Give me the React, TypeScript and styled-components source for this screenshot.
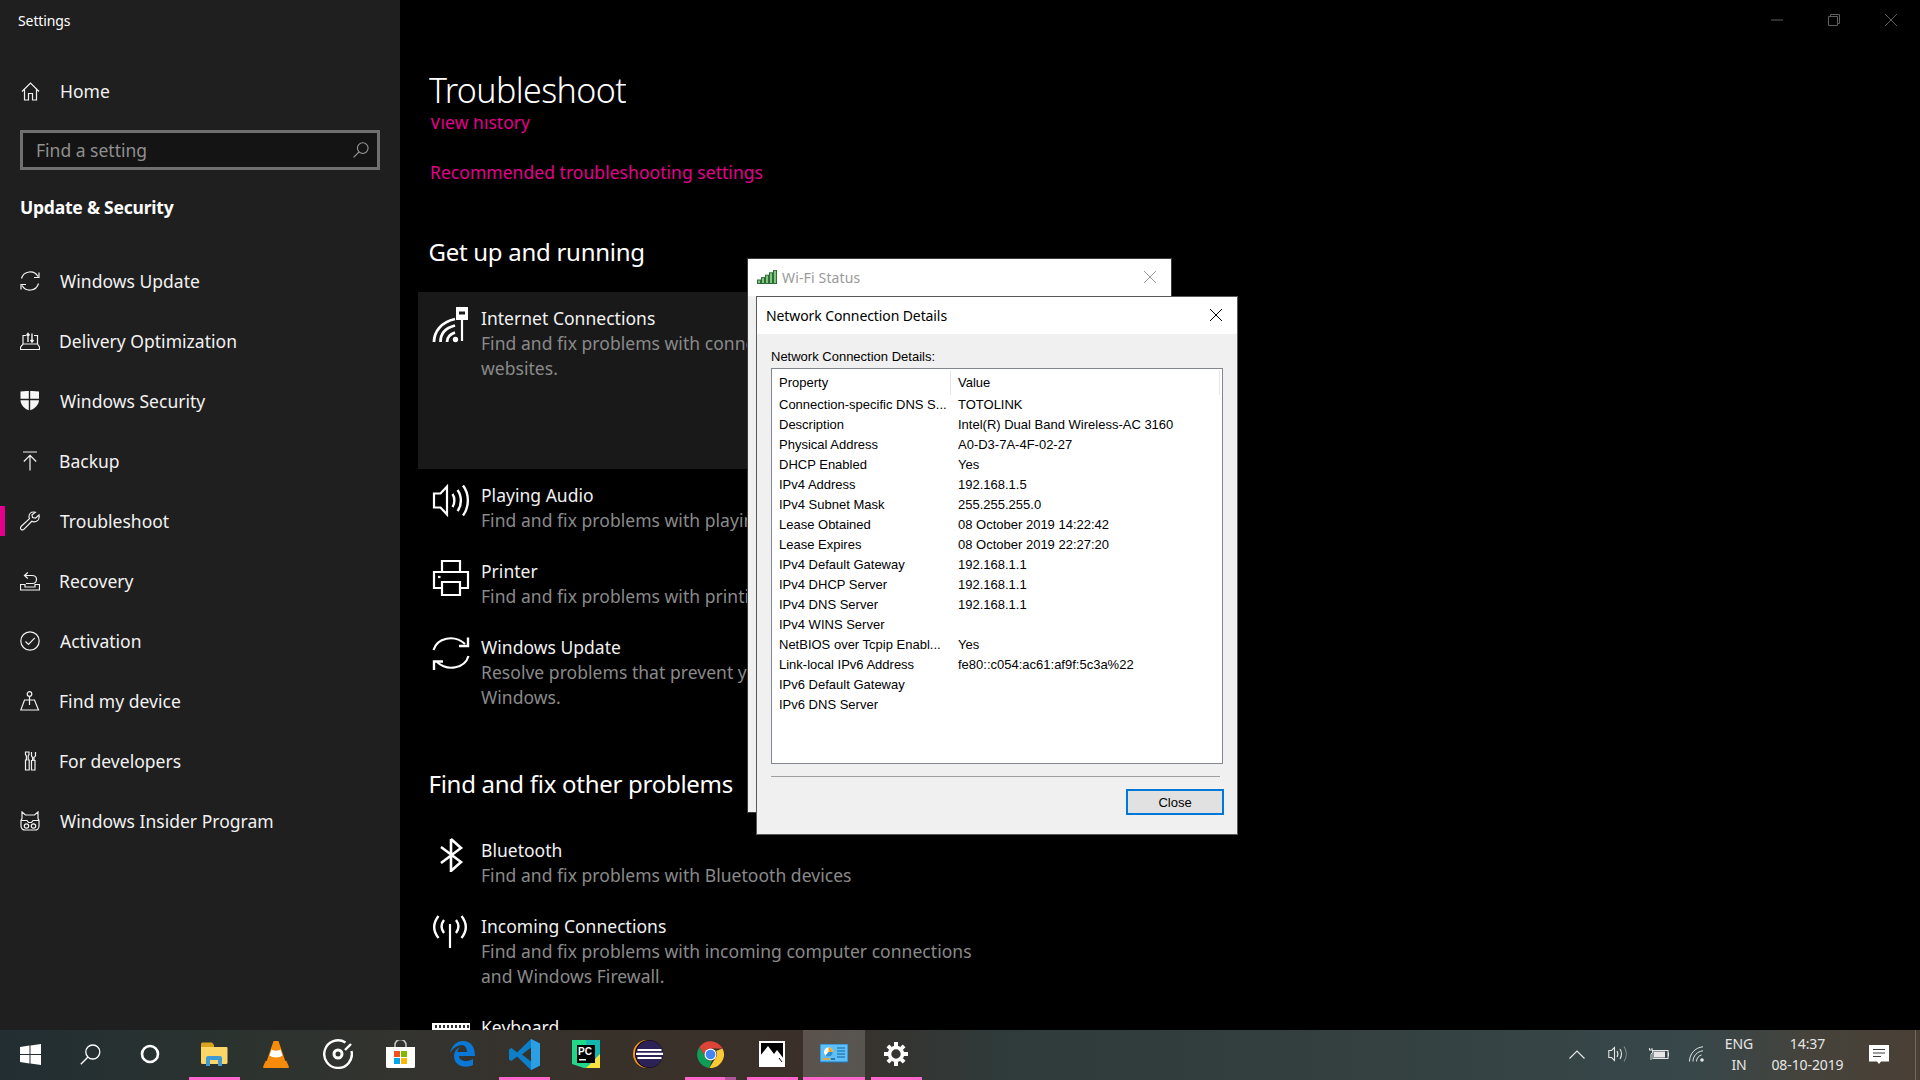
import React from 'react';
import styled, { createGlobalStyle } from 'styled-components';

const GlobalStyle = createGlobalStyle`
  html, body {
    margin: 0;
    padding: 0;
    background: #000;
    overflow: hidden;
  }
  * {
    box-sizing: border-box;
  }
`;

const UI_FONT = `"Noto Sans", "Open Sans", sans-serif`;
const DLG_FONT = `"Liberation Sans", Arial, sans-serif`;
const ACCENT = '#e3008c';

const Desktop = styled.div`
  position: relative;
  width: 1920px;
  height: 1080px;
  display: flex;
  flex-direction: column;
  overflow: hidden;
  font-family: ${UI_FONT};
  color: #fff;
`;

const SettingsWindow = styled.div`
  display: flex;
  height: 1030px;
  background: #000;
`;

const Sidebar = styled.aside`
  width: 400px;
  flex: none;
  background: #1f1f1f;
`;

const AppTitle = styled.div`
  height: 40px;
  padding-left: 18px;
  line-height: 41px;
  font-size: 14px;
  letter-spacing: -0.1px;
`;

const NavRow = styled.div<{ $active?: boolean; $tight?: boolean }>`
  position: relative;
  display: flex;
  align-items: center;
  height: 60px;
  padding-left: 20px;
  gap: ${({ $tight }) => ($tight ? 19 : 20)}px;
  font-size: 17.5px;
  letter-spacing: 0.02px;
  color: #f2f2f2;

  ${({ $active }) =>
    $active &&
    `
    &::before {
      content: '';
      position: absolute;
      left: 0;
      top: 15px;
      width: 5px;
      height: 30px;
      background: ${ACCENT};
    }
  `}
`;

const HomeRow = styled(NavRow)`
  margin-top: 21px;
`;

const SearchBox = styled.div`
  display: flex;
  align-items: center;
  justify-content: space-between;
  width: 360px;
  height: 40px;
  margin: 9px 0 0 20px;
  padding: 0 8px 0 13px;
  border: 3px solid #6f6f6f;
  background: #141414;
  color: #8f8f8f;
  font-size: 17.5px;
`;

const SectionTitle = styled.div`
  height: 30px;
  margin: 22px 0 29px 20px;
  line-height: 30px;
  font-size: 17.5px;
  font-weight: 700;
  letter-spacing: -0.22px;
`;

const Main = styled.main`
  flex: 1;
  display: flex;
  flex-direction: column;
  min-width: 0;
`;

const MainHeader = styled.header`
  display: flex;
  justify-content: space-between;
  height: 118px;
  flex: none;
  padding-left: 29px;
  padding-right: 1px;
`;

const PageTitle = styled.h1`
  margin: 0;
  padding-top: 65px;
  font-size: 34px;
  line-height: 50px;
  height: 118px;
  font-weight: 300;
  letter-spacing: -0.6px;
  overflow: hidden;
  color: #fff;
`;

const WindowControls = styled.div`
  display: flex;
  height: 40px;
`;

const WindowButton = styled.div`
  width: 57px;
  display: flex;
  align-items: center;
  justify-content: center;
`;

const Scroller = styled.div`
  flex: 1;
  overflow: hidden;
  padding-left: 30px;
`;

const ScrollContent = styled.div`
  margin-top: -8px;
  width: 700px;
`;

const PageLink = styled.div<{ $gap?: number }>`
  margin-top: ${({ $gap }) => $gap ?? 0}px;
  height: 25px;
  line-height: 25px;
  font-size: 17.5px;
  letter-spacing: 0.04px;
  color: ${ACCENT};
`;

const GroupHeading = styled.h2<{ $top: number }>`
  margin: ${({ $top }) => $top}px 0 0 -1.5px;
  height: 34px;
  line-height: 34px;
  font-size: 24px;
  font-weight: 400;
  letter-spacing: -0.28px;
  color: #fff;
`;

const TroubleRow = styled.div<{ $selected?: boolean; $top?: number }>`
  display: flex;
  gap: 11px;
  margin: ${({ $top }) => $top ?? 0}px 0 0 -12px;
  padding: 14px 0 12px 14px;
  width: 620px;
  background: ${({ $selected }) => ($selected ? '#191919' : 'transparent')};
  min-height: ${({ $selected }) => ($selected ? '177px' : '0')};
`;

const TroubleIcon = styled.div`
  width: 38px;
  flex: none;
  display: flex;
  justify-content: center;
  align-items: flex-start;
`;

const TroubleText = styled.div`
  width: 510px;
`;

const TroubleName = styled.div`
  line-height: 25px;
  font-size: 17.5px;
  letter-spacing: 0.02px;
  color: #f2f2f2;
`;

const TroubleDesc = styled.div`
  line-height: 25px;
  font-size: 17.5px;
  letter-spacing: 0.04px;
  color: #8a8a8a;
`;

/* dialogs */
const WifiStatusWindow = styled.div`
  position: absolute;
  left: 747px;
  top: 258px;
  width: 425px;
  height: 555px;
  background: #f0f0f0;
  border: 1px solid #3a3a3a;
`;

const WifiTitleBar = styled.div`
  display: flex;
  align-items: center;
  height: 37px;
  padding: 0 15px 1px 9px;
  gap: 5px;
  background: #fff;
  font-family: ${UI_FONT};
  font-size: 14px;
  letter-spacing: 0.15px;
  color: #9a9a9a;
`;

const DialogClose = styled.div`
  margin-left: auto;
  display: flex;
`;

const DetailsDialog = styled.div`
  position: absolute;
  left: 756px;
  top: 296px;
  width: 482px;
  height: 539px;
  display: flex;
  flex-direction: column;
  background: #f0f0f0;
  border: 1px solid #5a5a5a;
  font-family: ${DLG_FONT};
  font-size: 13px;
  color: #000;
`;

const DetailsTitleBar = styled.div`
  display: flex;
  align-items: center;
  flex: none;
  height: 37px;
  padding: 0 15px 1px 9px;
  background: #fff;
  font-family: ${UI_FONT};
  font-size: 14px;
  letter-spacing: -0.1px;
  color: #000;
`;

const DetailsBody = styled.div`
  flex: 1;
  padding: 15px 13px 0 14px;
`;

const DetailsLabel = styled.div`
  height: 16px;
  margin-bottom: 3px;
  line-height: 16px;
  font-size: 13px;
`;

const ListBox = styled.div`
  width: 452px;
  height: 396px;
  background: #fff;
  border: 1px solid #828790;
`;

const ListHeader = styled.div`
  display: grid;
  grid-template-columns: 179px 1fr;
  height: 24px;
  margin-top: 2px;
  margin-right: 2px;
  line-height: 24px;
  border-right: 1px solid #e5e5e5;
`;

const ListHeaderCell = styled.div<{ $first?: boolean }>`
  padding-left: 7px;
  border-right: ${({ $first }) => ($first ? '1px solid #e5e5e5' : 'none')};
`;

const ListRow = styled.div`
  display: grid;
  grid-template-columns: 179px 1fr;
  height: 20px;
  line-height: 20px;
`;

const ListCell = styled.div`
  padding-left: 7px;
  white-space: nowrap;
  overflow: hidden;
`;

const Divider = styled.div`
  width: 449px;
  margin-top: 12px;
  border-top: 1px solid #a0a0a0;
`;

const DialogFooter = styled.div`
  display: flex;
  justify-content: flex-end;
  width: 453px;
  margin-top: 12px;
`;

const CloseButton = styled.button`
  width: 98px;
  height: 26px;
  padding: 0;
  background: #e1e1e1;
  border: 2px solid #0078d7;
  font-family: ${DLG_FONT};
  font-size: 13px;
  color: #000;
`;

/* taskbar */
const Taskbar = styled.footer`
  display: flex;
  align-items: stretch;
  height: 50px;
  flex: none;
  background: linear-gradient(
    90deg,
    #222e33 0%,
    #2b332f 12%,
    #33332f 21%,
    #38312a 32%,
    #3a3029 42%,
    #2f3a3a 52%,
    #34403f 70%,
    #37474a 88%,
    #45433c 94%,
    #4a3f35 100%
  );
`;

const SystemButtons = styled.div`
  display: flex;
  margin-right: 3px;
`;

const SystemButton = styled.div`
  width: 60px;
  display: flex;
  align-items: center;
  justify-content: center;
  padding-bottom: 2px;
`;

const AppButton = styled.div<{ $running?: boolean; $active?: boolean; $stacked?: boolean }>`
  position: relative;
  width: 62px;
  display: flex;
  align-items: center;
  justify-content: center;
  padding-bottom: 2px;
  background: ${({ $active }) => ($active ? 'rgba(255,255,255,0.17)' : 'transparent')};

  ${({ $running, $active, $stacked }) =>
    $running &&
    `
    &::after {
      content: '';
      position: absolute;
      bottom: 0;
      left: ${$active ? 0 : 5.5}px;
      right: ${$active ? 0 : 5.5}px;
      height: 3px;
      background: ${$stacked ? 'linear-gradient(90deg, #ff66cc 78%, #b0559a 78%)' : '#ff66cc'};
    }
  `}
`;

const Tray = styled.div`
  margin-left: auto;
  display: flex;
  color: #e6e6e6;
  font-size: 14px;
`;

const TrayItem = styled.div<{ $w: number }>`
  width: ${({ $w }) => $w}px;
  display: flex;
  flex-direction: column;
  align-items: center;
  justify-content: center;
  padding-bottom: 2px;
  line-height: 21px;
  letter-spacing: -0.1px;
`;

const ShowDesktop = styled.div`
  width: 14px;
  padding-left: 9px;
  &::before {
    content: '';
    display: block;
    width: 1px;
    height: 100%;
    background: #6d6a66;
  }
`;

/* sidebar icons, 20x20 */
const Nav = ({ children }: { children: React.ReactNode }) => (
  <svg width="20" height="20" viewBox="0 0 20 20" fill="none" stroke="#f2f2f2" strokeWidth="1.2">
    {children}
  </svg>
);

const navIcons: Record<string, React.ReactNode> = {
  home: (
    <Nav>
      <path d="M2 10.5 10.5 2 19 10.5M4.5 8.5V19H8.5V12.5H12.5V19H16.5V8.5" />
    </Nav>
  ),
  update: (
    <Nav>
      <path d="M1.500 7.500A9 9 0 0 1 18 5.500M18.500 12.500A9 9 0 0 1 2 14.500" />
      <path d="M19 1.500V6.500H14M1 18.500V13.500H6" />
    </Nav>
  ),
  delivery: (
    <Nav>
      <path d="M3 13V4.500H6M14 4.500H17.500V13M.5 18.500H19.500V16L17.500 13H3L.5 16Z" />
      <path d="M8 11V3M6.500 4.500 8 2.500 9.500 4.500M12 2.500V11M10.500 9 12 11 13.500 9" strokeWidth="1.4" />
    </Nav>
  ),
  shield: (
    <svg width="20" height="20" viewBox="0 0 20 20">
      <path d="M.5.500C4 .500 7 0 9.500-.5 12 0 15 .500 19 .500V9C19 14 14.500 18 9.500 19.500 4.500 18 .5 14 .5 9Z" fill="#f7f7f7" />
      <path d="M9.500-1V20M0 8.500H20" stroke="#1f1f1f" strokeWidth="1.4" />
    </svg>
  ),
  backup: (
    <Nav>
      <path d="M3 1H17M10 19.500V4.500M3.800 10.500 10 4.300 16.200 10.500" />
    </Nav>
  ),
  wrench: (
    <Nav>
      <path d="M13.500 1C10.800 1 9 3 9 5.500 9 6.300 9.200 7 9.500 7.700L1.300 15.300C.3 16.300.3 17.500 1 18.300 1.800 19.200 3.200 19.200 4.100 18.200L11.800 10.300C12.500 10.600 13.300 10.800 14 10.800 17 10.800 19.200 8.500 19.200 5.500 19.200 5 19.100 4.500 19 4L15.500 7.200 12.500 6.500 12 3.800 15.400 1.300C14.800 1.100 14.200 1 13.500 1Z" />
    </Nav>
  ),
  recovery: (
    <Nav>
      <path d="M.5 19H19.500V13.500H15V16H5V13.500H.5Z" />
      <path d="M4.500 4.500H12C15 4.500 16.500 6.500 16.500 8.500 16.500 10.500 15 12.500 12.500 12.500H6M7.800 1.500 4.500 4.500 7.800 7.500" />
    </Nav>
  ),
  activation: (
    <Nav>
      <circle cx="10" cy="10" r="9.200" />
      <path d="M5.500 10.500 8.500 13.500 14.800 6.800" />
    </Nav>
  ),
  device: (
    <Nav>
      <circle cx="9.500" cy="3" r="2.300" />
      <path d="M9.500 5.500V14M4.500 9H14.500L18.500 19H.8Z" />
    </Nav>
  ),
  developer: (
    <Nav>
      <path d="M5.500 1H9V3.500L8.200 5V9H9.200V19H5.500V9H6.400V5L5.500 3.500Z" />
      <path d="M11.500 1V4.500C11.500 5.500 12 6 12.600 6.300V9.500H11.500V19H15V9.500H14V6.300C14.600 6 15.500 5.500 15.500 4.500V1" />
    </Nav>
  ),
  insider: (
    <Nav>
      <path d="M2 1 5.500 4H14.500L18 1V7.500L19 9.500V15C19 17.500 17 19 15 19H5C3 19 1 17.500 1 15V9.500L2 7.500Z" />
      <path d="M1 9.500H7L8.500 11.500H11.500L13 9.500H19" />
      <circle cx="6.500" cy="15" r="2.200" />
      <circle cx="13.500" cy="15" r="2.200" />
    </Nav>
  ),
};

const navItems: { icon: string; label: string; tight?: boolean }[] = [
  { icon: 'update', label: 'Windows Update' },
  { icon: 'delivery', label: 'Delivery Optimization', tight: true },
  { icon: 'shield', label: 'Windows Security' },
  { icon: 'backup', label: 'Backup', tight: true },
  { icon: 'wrench', label: 'Troubleshoot' },
  { icon: 'recovery', label: 'Recovery', tight: true },
  { icon: 'activation', label: 'Activation' },
  { icon: 'device', label: 'Find my device', tight: true },
  { icon: 'developer', label: 'For developers', tight: true },
  { icon: 'insider', label: 'Windows Insider Program' },
];

/* troubleshooter icons, 38px wide */
const Big = ({ children, w = 38, h = 38 }: { children: React.ReactNode; w?: number; h?: number }) => (
  <svg width={w} height={h} viewBox={`0 0 ${w} ${h}`} fill="none" stroke="#fff" strokeWidth="2.2">
    {children}
  </svg>
);

const InternetIcon = () => (
  <Big>
    <path d="M2 36C2 26 9 16 23 13M8.500 36C8.500 28 13 22 23 19.500M15 36C15 32 17 28.500 23 26.500" strokeWidth="2.800" />
    <circle cx="23.500" cy="33.500" r="2.700" fill="#fff" stroke="none" />
    <path d="M30 14V35" />
    <rect x="24" y="1" width="12" height="13" fill="#fff" stroke="none" />
    <rect x="27" y="5.500" width="6" height="3" fill="#191919" stroke="none" />
  </Big>
);

const AudioIcon = () => (
  <Big h={34}>
    <path d="M2 10.500H8.500L15 3.500V31.500L8.500 24.500H2Z" />
    <path d="M20.500 11C23 14.500 23 20.500 20.500 24M25.500 7C30 13 30 22 25.500 28M31 2.500C37.500 11 37.500 24 31 32.500" strokeWidth="2.400" />
  </Big>
);

const PrinterIcon = () => (
  <Big>
    <path d="M10 13V2H28V13" />
    <path d="M10 29H2V13H36V29H28" />
    <path d="M10 23H28V36H10Z" />
    <path d="M6 18H8.500" />
  </Big>
);

const SyncIcon = () => (
  <Big>
    <path d="M1.500 15C5 3 22 -1 33 9M36.500 21C33 33 16 37 5 27" />
    <path d="M36 2.500V11H27M2 35V26.500H11" strokeWidth="2.400" />
  </Big>
);

const BluetoothIcon = () => (
  <Big h={34}>
    <path d="M19 1V33L29 24 9 9M19 1 29 10 9 25" strokeWidth="2.600" />
  </Big>
);

const AntennaIcon = () => (
  <Big h={34}>
    <path d="M18 10V34" strokeWidth="2.200" />
    <path d="M12 6C9 10 9 15 12 19M24 6C27 10 27 15 24 19M6.500 2C1 9 1 17 6.500 24M29.500 2C35 9 35 17 29.500 24" strokeWidth="2.400" />
  </Big>
);

const KeyboardIcon = () => (
  <Big h={30}>
    <rect x="0" y="8" width="38" height="22" fill="#fff" stroke="none" />
    <path d="M4 10V13M8 10V13M12 10V13M16 10V13M20 10V13M24 10V13M28 10V13M32 10V13M36 10V13" stroke="#000" strokeWidth="1.600" />
  </Big>
);

/* taskbar icons */
const WindowsIcon = () => (
  <svg width="21" height="21" viewBox="0 0 21 21" fill="#fff">
    <path d="M0 3 9.500 1.600V10H0ZM10.500 1.400 21 0V10H10.500ZM0 11H9.500V19.400L0 18ZM10.500 11H21V21L10.500 19.600Z" />
  </svg>
);

const SearchIcon = ({ size = 21, color = '#fff', w = 1.300 }: { size?: number; color?: string; w?: number }) => (
  <svg width={size} height={size} viewBox="0 0 21 21" fill="none" stroke={color} strokeWidth={w}>
    <circle cx="12.800" cy="8" r="7" />
    <path d="M8 13 .8 20.300" />
  </svg>
);

const CortanaIcon = () => (
  <svg width="20" height="20" viewBox="0 0 20 20" fill="none" stroke="#fff" strokeWidth="2.600">
    <circle cx="10" cy="10" r="8" />
  </svg>
);

const ExplorerIcon = () => (
  <svg width="28" height="24" viewBox="0 0 28 24">
    <path d="M1 2A1.500 1.500 0 0 1 2.500 .5H12L14 3V6H1Z" fill="#d9a21f" />
    <path d="M1 5H26.500A1 1 0 0 1 27.500 6V20.500A1.500 1.500 0 0 1 26 22H2.500A1.500 1.500 0 0 1 1 20.500Z" fill="#fcd768" />
    <path d="M6 24V16A2 2 0 0 1 8 14H20A2 2 0 0 1 22 16V24H18V18H10V24Z" fill="#3f9ad6" />
  </svg>
);

const VlcIcon = () => (
  <svg width="26" height="27" viewBox="0 0 26 27">
    <path d="M10.500 0H15.500L23 22H3Z" fill="#f58a0b" />
    <path d="M8.500 8.500C10 10 16 10 17.500 8.500L19.500 14.500C17 17 9 17 6.500 14.500Z" fill="#fff" />
    <path d="M2.500 20H23.500L26 26A1 1 0 0 1 25 27H1A1 1 0 0 1 0 26Z" fill="#f58a0b" />
  </svg>
);

const GrooveIcon = () => (
  <svg width="30" height="30" viewBox="0 0 30 30" fill="none" stroke="#fff">
    <path d="M22.500 3.500A13.800 13.800 0 1 0 28.500 12" strokeWidth="2.400" />
    <path d="M28 5 22 11" strokeWidth="2.400" />
    <circle cx="15" cy="15" r="4" strokeWidth="3" />
  </svg>
);

const StoreIcon = () => (
  <svg width="29" height="28" viewBox="0 0 29 28">
    <path d="M9 9V5A5.500 5.500 0 0 1 20 5V9" fill="none" stroke="#c9c9c9" strokeWidth="1.500" />
    <path d="M0 7H29V26.500A1.500 1.500 0 0 1 27.500 28H1.500A1.500 1.500 0 0 1 0 26.500Z" fill="#fff" />
    <rect x="8" y="11" width="6" height="6" fill="#f25022" />
    <rect x="15" y="11" width="6" height="6" fill="#7fba00" />
    <rect x="8" y="18" width="6" height="6" fill="#00a4ef" />
    <rect x="15" y="18" width="6" height="6" fill="#ffb900" />
  </svg>
);

const EdgeIcon = () => (
  <svg width="25" height="26" viewBox="0 0 25 26">
    <path
      d="M0 12C2 4 7 0 13 0 20 0 25 5 25 15H9C9.500 20 16 22 23 18V24C15 28 4 25 4 15 4 11 6 8 10 6 8 8 7.500 9.500 7.500 11H17C17 7 15 4 12 4 7.500 4 3 7 0 12Z"
      fill="#0a78d7"
    />
  </svg>
);

const VsCodeIcon = () => (
  <svg width="31" height="31" viewBox="0 0 31 31">
    <path d="M22 0 31 4.500V26.500L22 31 8 17.500 2.500 22 0 20.500V10.500L2.500 9 8 13.500Z M22 8.500 13 15.500 22 22.500Z" fill="#0d7fc9" fillRule="evenodd" />
    <path d="M22 0 31 4.500V26.500L22 31Z" fill="#2a9fe4" />
  </svg>
);

const PyCharmIcon = () => (
  <svg width="28" height="28" viewBox="0 0 28 28">
    <path d="M0 0H28L24 14 28 28H12L0 24Z" fill="#21d789" />
    <path d="M14 0H28V28H16Z" fill="#12b8b0" />
    <path d="M28 14V28H14Z" fill="#f5e33b" />
    <rect x="5" y="5" width="18" height="18" fill="#000" />
    <text x="6" y="14.500" fill="#fff" fontFamily="Liberation Sans" fontSize="10" fontWeight="700">PC</text>
    <rect x="7" y="19" width="7" height="1.500" fill="#fff" />
  </svg>
);

const EclipseIcon = () => (
  <svg width="30" height="28" viewBox="0 0 30 28">
    <circle cx="14" cy="14" r="14" fill="#f7941e" />
    <circle cx="16" cy="14" r="14" fill="#000" />
    <circle cx="16.500" cy="14" r="13.500" fill="#2c2255" />
    <path d="M4.500 9H28.500V11H4.500ZM3 12.800H30V15H3ZM4.500 17H28.500V19H4.500Z" fill="#fff" />
  </svg>
);

const ChromeIcon = () => (
  <svg width="27" height="27" viewBox="0 0 27 27">
    <path d="M2.400 6A13.500 13.500 0 0 1 25.500 7.500H13.500A6 6 0 0 0 7.700 15Z" fill="#db4437" />
    <path d="M25.500 7.500A13.500 13.500 0 0 1 12.300 27L18.500 17A6 6 0 0 0 19 10Z" fill="#fcc934" />
    <path d="M12.300 27A13.500 13.500 0 0 1 2.400 6L8.500 16.500A6 6 0 0 0 15 19.500Z" fill="#0f9d58" />
    <circle cx="13.500" cy="13.500" r="6" fill="#fff" />
    <circle cx="13.500" cy="13.500" r="4.800" fill="#4285f4" />
  </svg>
);

const PhotosIcon = () => (
  <svg width="26" height="26" viewBox="0 0 26 26">
    <rect x="1" y="1" width="24" height="24" fill="#000" stroke="#fff" strokeWidth="2" />
    <path d="M1 25V15L9 5 15 13 18 9 25 18V25Z" fill="#fff" />
    <path d="M20 17 23 21" stroke="#000" strokeWidth="1" />
  </svg>
);

const ControlPanelIcon = () => (
  <svg width="28" height="20" viewBox="0 0 28 20">
    <rect x="0" y="0" width="28" height="18" fill="#5fc0f5" stroke="#1b79c8" strokeWidth="1" />
    <circle cx="8.500" cy="8" r="4.500" fill="#fff" />
    <path d="M8.500 8V3.500A4.500 4.500 0 0 1 13 8Z" fill="#f6a623" />
    <path d="M8.500 8H13A4.500 4.500 0 0 1 5.500 11.500Z" fill="#2d8fd6" />
    <path d="M17 4H25M17 7H25M17 10H25M17 13H25" stroke="#17609f" strokeWidth="1.200" />
    <path d="M3 15H10" stroke="#f6a623" strokeWidth="1.500" />
    <path d="M11 15H15" stroke="#17609f" strokeWidth="1.500" />
  </svg>
);

const GearIcon = () => (
  <svg width="24" height="24" viewBox="0 0 24 24">
    <circle cx="12" cy="12" r="6.500" fill="none" stroke="#fff" strokeWidth="3.600" />
    <path
      d="M10 0H14V4H10ZM10 20H14V24H10ZM0 10H4V14H0ZM20 10H24V14H20ZM2.500 5.300 5.300 2.500 8 5.300 5.300 8ZM16 18.700 18.700 16 21.500 18.700 18.700 21.500ZM2.500 18.700 5.300 16 8 18.700 5.300 21.500ZM16 5.300 18.700 2.500 21.500 5.300 18.700 8Z"
      fill="#fff"
    />
  </svg>
);

const ChevronIcon = () => (
  <svg width="16" height="9" viewBox="0 0 16 9" fill="none" stroke="#e6e6e6" strokeWidth="1.200">
    <path d="M.5 8.500 8 1 15.500 8.500" />
  </svg>
);

const SpeakerIcon = () => (
  <svg width="20" height="16" viewBox="0 0 20 16" fill="none" stroke="#e6e6e6" strokeWidth="1.100">
    <path d="M.8 4.500H3.500L6.500 1.500V14.500L3.500 11.500H.8Z" />
    <path d="M9 5C10.200 7 10.200 9 9 11M12 3C13.800 6 13.800 10 12 13" />
    <path d="M16 .5C19 5 19 11 16 15.500" stroke="#8a8a8a" />
  </svg>
);

const BatteryIcon = () => (
  <svg width="20" height="12" viewBox="0 0 20 12">
    <path d="M.5 0V2M3 0V2M0 2H3.500V4.500L2 6V12" fill="none" stroke="#e6e6e6" strokeWidth="1" />
    <rect x="4" y="2.500" width="15" height="8" fill="none" stroke="#e6e6e6" />
    <rect x="5" y="3.500" width="11" height="6" fill="#e6e6e6" />
    <rect x="19" y="4.500" width="1" height="4" fill="#e6e6e6" />
  </svg>
);

const TrayWifiIcon = () => (
  <svg width="16" height="16" viewBox="0 0 16 16" fill="none" stroke="#e6e6e6" strokeWidth="1">
    <path d="M.5 15.500C.5 8 6 1.500 14 .8M4 15.500C4 10 8 5.500 14 4.800" />
    <path d="M7.500 15.500C7.500 12 10 9.500 12.500 9" stroke="#e6e6e6" />
    <circle cx="13" cy="14" r="1.800" fill="#e6e6e6" stroke="none" />
  </svg>
);

const NotificationIcon = () => (
  <svg width="20" height="19" viewBox="0 0 20 19">
    <path d="M0 0H20V16.500H12L10 19 8 16.500H0Z" fill="#fff" />
    <path d="M4 4.500H16M4 8H16M4 11.500H12" stroke="#3c3c3c" strokeWidth="1" />
  </svg>
);

const CrossIcon = ({ size, color, w = 1 }: { size: number; color: string; w?: number }) => (
  <svg width={size} height={size} viewBox={`0 0 ${size} ${size}`} stroke={color} strokeWidth={w}>
    <path d={`M0 0 ${size} ${size}M${size} 0 0 ${size}`} />
  </svg>
);

const SignalIcon = () => (
  <svg width="20" height="14" viewBox="0 0 20 14">
    {[0, 1, 2, 3, 4].map((i) => (
      <rect
        key={i}
        x={i * 4 + 0.5}
        y={10 - i * 2.4}
        width="3"
        height={3.5 + i * 2.4}
        fill="#7fc77f"
        stroke="#2f6a3a"
        strokeWidth="1"
      />
    ))}
  </svg>
);

const networkRows: [string, string][] = [
  ['Connection-specific DNS S...', 'TOTOLINK'],
  ['Description', 'Intel(R) Dual Band Wireless-AC 3160'],
  ['Physical Address', 'A0-D3-7A-4F-02-27'],
  ['DHCP Enabled', 'Yes'],
  ['IPv4 Address', '192.168.1.5'],
  ['IPv4 Subnet Mask', '255.255.255.0'],
  ['Lease Obtained', '08 October 2019 14:22:42'],
  ['Lease Expires', '08 October 2019 22:27:20'],
  ['IPv4 Default Gateway', '192.168.1.1'],
  ['IPv4 DHCP Server', '192.168.1.1'],
  ['IPv4 DNS Server', '192.168.1.1'],
  ['IPv4 WINS Server', ''],
  ['NetBIOS over Tcpip Enabl...', 'Yes'],
  ['Link-local IPv6 Address', 'fe80::c054:ac61:af9f:5c3a%22'],
  ['IPv6 Default Gateway', ''],
  ['IPv6 DNS Server', ''],
];

const apps: { icon: React.ReactNode; running?: boolean; active?: boolean; stacked?: boolean }[] = [
  { icon: <ExplorerIcon />, running: true },
  { icon: <VlcIcon /> },
  { icon: <GrooveIcon /> },
  { icon: <StoreIcon /> },
  { icon: <EdgeIcon /> },
  { icon: <VsCodeIcon />, running: true },
  { icon: <PyCharmIcon /> },
  { icon: <EclipseIcon /> },
  { icon: <ChromeIcon />, running: true, stacked: true },
  { icon: <PhotosIcon />, running: true },
  { icon: <ControlPanelIcon />, running: true, active: true },
  { icon: <GearIcon />, running: true },
];

const App: React.FC = () => (
  <Desktop>
    <GlobalStyle />
    <SettingsWindow>
      <Sidebar>
        <AppTitle>Settings</AppTitle>
        <HomeRow>
          {navIcons.home}
          Home
        </HomeRow>
        <SearchBox>
          Find a setting
          <SearchIcon size={16} color="#9a9a9a" w={1.400} />
        </SearchBox>
        <SectionTitle>Update &amp; Security</SectionTitle>
        {navItems.map(({ icon, label, tight }) => (
          <NavRow key={label} $tight={tight} $active={label === 'Troubleshoot'}>
            {navIcons[icon]}
            {label}
          </NavRow>
        ))}
      </Sidebar>
      <Main>
        <MainHeader>
          <PageTitle>Troubleshoot</PageTitle>
          <WindowControls>
            <WindowButton>
              <svg width="12" height="2" viewBox="0 0 12 2"><path d="M0 1H12" stroke="#5f5f5f" /></svg>
            </WindowButton>
            <WindowButton>
              <svg width="12" height="12" viewBox="0 0 12 12" fill="none" stroke="#5f5f5f">
                <path d="M.5 2.500H9.500V11.500H.5ZM2.500 2.500V.5H11.500V9.500H9.500" />
              </svg>
            </WindowButton>
            <WindowButton>
              <CrossIcon size={12} color="#5f5f5f" />
            </WindowButton>
          </WindowControls>
        </MainHeader>
        <Scroller>
          <ScrollContent>
            <PageLink>View history</PageLink>
            <PageLink $gap={25}>Recommended troubleshooting settings</PageLink>
            <GroupHeading $top={50}>Get up and running</GroupHeading>
            <TroubleRow $selected $top={23}>
              <TroubleIcon><InternetIcon /></TroubleIcon>
              <TroubleText>
                <TroubleName>Internet Connections</TroubleName>
                <TroubleDesc>Find and fix problems with connecting to the Internet or to websites.</TroubleDesc>
              </TroubleText>
            </TroubleRow>
            <TroubleRow>
              <TroubleIcon><AudioIcon /></TroubleIcon>
              <TroubleText>
                <TroubleName>Playing Audio</TroubleName>
                <TroubleDesc>Find and fix problems with playing sound</TroubleDesc>
              </TroubleText>
            </TroubleRow>
            <TroubleRow>
              <TroubleIcon><PrinterIcon /></TroubleIcon>
              <TroubleText>
                <TroubleName>Printer</TroubleName>
                <TroubleDesc>Find and fix problems with printing</TroubleDesc>
              </TroubleText>
            </TroubleRow>
            <TroubleRow>
              <TroubleIcon><SyncIcon /></TroubleIcon>
              <TroubleText>
                <TroubleName>Windows Update</TroubleName>
                <TroubleDesc>Resolve problems that prevent you from updating<br />Windows.</TroubleDesc>
              </TroubleText>
            </TroubleRow>
            <GroupHeading $top={45}>Find and fix other problems</GroupHeading>
            <TroubleRow $top={23}>
              <TroubleIcon><BluetoothIcon /></TroubleIcon>
              <TroubleText>
                <TroubleName>Bluetooth</TroubleName>
                <TroubleDesc>Find and fix problems with Bluetooth devices</TroubleDesc>
              </TroubleText>
            </TroubleRow>
            <TroubleRow>
              <TroubleIcon><AntennaIcon /></TroubleIcon>
              <TroubleText>
                <TroubleName>Incoming Connections</TroubleName>
                <TroubleDesc>Find and fix problems with incoming computer connections and Windows Firewall.</TroubleDesc>
              </TroubleText>
            </TroubleRow>
            <TroubleRow>
              <TroubleIcon><KeyboardIcon /></TroubleIcon>
              <TroubleText>
                <TroubleName>Keyboard</TroubleName>
              </TroubleText>
            </TroubleRow>
          </ScrollContent>
        </Scroller>
      </Main>
    </SettingsWindow>

    <WifiStatusWindow>
      <WifiTitleBar>
        <SignalIcon />
        Wi-Fi Status
        <DialogClose><CrossIcon size={12} color="#9a9a9a" /></DialogClose>
      </WifiTitleBar>
    </WifiStatusWindow>

    <DetailsDialog>
      <DetailsTitleBar>
        Network Connection Details
        <DialogClose><CrossIcon size={12} color="#000" /></DialogClose>
      </DetailsTitleBar>
      <DetailsBody>
        <DetailsLabel>Network Connection Details:</DetailsLabel>
        <ListBox>
          <ListHeader>
            <ListHeaderCell $first>Property</ListHeaderCell>
            <ListHeaderCell>Value</ListHeaderCell>
          </ListHeader>
          {networkRows.map(([prop, value]) => (
            <ListRow key={prop}>
              <ListCell>{prop}</ListCell>
              <ListCell>{value}</ListCell>
            </ListRow>
          ))}
        </ListBox>
        <Divider />
        <DialogFooter>
          <CloseButton>Close</CloseButton>
        </DialogFooter>
      </DetailsBody>
    </DetailsDialog>

    <Taskbar>
      <SystemButtons>
        <SystemButton><WindowsIcon /></SystemButton>
        <SystemButton><SearchIcon /></SystemButton>
        <SystemButton><CortanaIcon /></SystemButton>
      </SystemButtons>
      {apps.map((app, i) => (
        <AppButton key={i} $running={app.running} $active={app.active} $stacked={app.stacked}>
          {app.icon}
        </AppButton>
      ))}
      <Tray>
        <TrayItem $w={40}><ChevronIcon /></TrayItem>
        <TrayItem $w={42}><SpeakerIcon /></TrayItem>
        <TrayItem $w={40}><BatteryIcon /></TrayItem>
        <TrayItem $w={36}><TrayWifiIcon /></TrayItem>
        <TrayItem $w={48}>
          <span>ENG</span>
          <span>IN</span>
        </TrayItem>
        <TrayItem $w={89}>
          <span>14:37</span>
          <span>08-10-2019</span>
        </TrayItem>
        <TrayItem $w={54}><NotificationIcon /></TrayItem>
        <ShowDesktop />
      </Tray>
    </Taskbar>
  </Desktop>
);

export default App;
